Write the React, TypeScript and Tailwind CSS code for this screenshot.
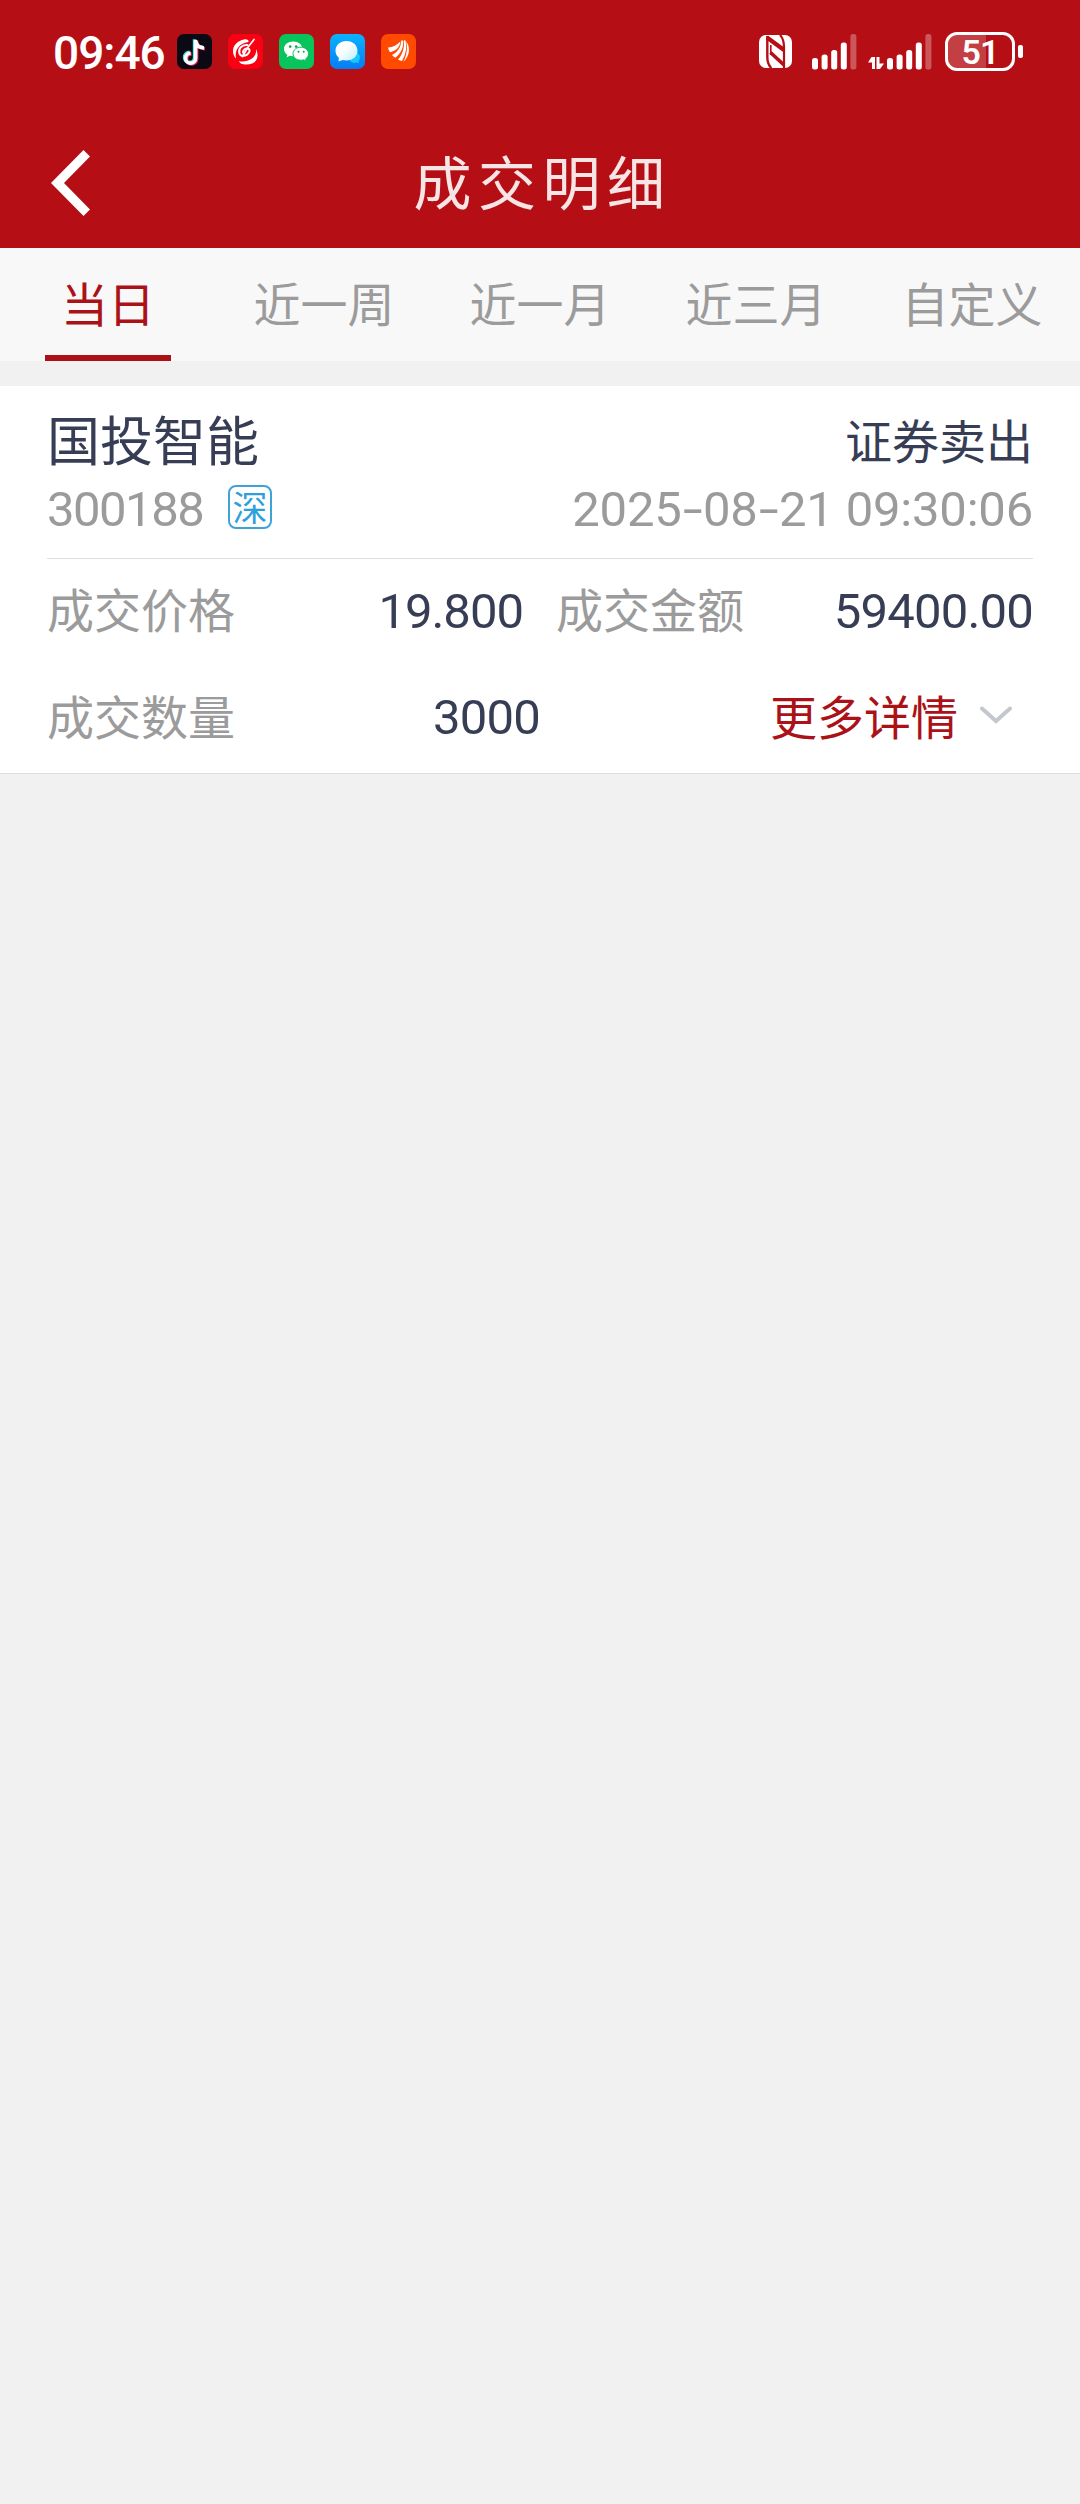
import { ReactNode } from "react";
import { clsx } from "clsx";

const tabs = ["当日", "近一周", "近一月", "近三月", "自定义"];

function Num({ className, children }: { className?: string; children: ReactNode }) {
  return (
    <span className={clsx("pt-[2px] font-['Roboto','Noto_Sans_CJK_SC',sans-serif] text-[49px] whitespace-nowrap", className)}>
      {children}
    </span>
  );
}

function Dash() {
  return <span className="mx-[1px] inline-block origin-center scale-x-[1.45] px-[3px]">-</span>;
}

function TikTokIcon() {
  return (
    <svg viewBox="0 0 35 35" className="size-[35px]">
      <rect width="35" height="35" rx="7" fill="#0b0a14" />
      <g fill="none" strokeWidth="3.6">
        <path d="M16.6 5v18.2a5 5 0 1 1-5-5M16.8 6.5c.7 4 3.6 6.3 8.2 6.5" transform="translate(1 .2)" stroke="#4fe3e0" />
        <path d="M16.6 5v18.2a5 5 0 1 1-5-5M16.8 6.5c.7 4 3.6 6.3 8.2 6.5" transform="translate(3 1.8)" stroke="#e8315b" />
        <path d="M16.6 5v18.2a5 5 0 1 1-5-5M16.8 6.5c.7 4 3.6 6.3 8.2 6.5" transform="translate(2 1)" stroke="#fff" />
      </g>
    </svg>
  );
}

function SwirlIcon() {
  return (
    <svg viewBox="0 0 35 35" className="size-[35px]">
      <rect width="35" height="35" rx="7" fill="#f90012" />
      <path d="M20.5 8C21 6 19 5 16 5.500 10 6.500 5 11 5 17c0 3 1 5.500 3 7.500C6.500 15.500 11 9.500 20.500 8Z" fill="#fff" />
      <path d="M11 27c3 1.200 9 .5 13-2.500 3-2.500 4.500-5.500 4-9.500 3.500 7 1.500 15.500-10 15.500-3.500 0-6.500-1-7-3.500Z" fill="#fff" />
      <g fill="none" stroke="#fff" strokeLinecap="round">
        <path d="M26 5.5C22 10 18 15 14.5 22.5" strokeWidth="1.8" />
        <path d="M19.5 11c-6-.5-9.500 4-8 8.500 1 3.500 7 3 9.500-1 1.500-2.500 0-4.500-2.500-4-3 .6-4.500 3.500-2.500 5" strokeWidth="2" />
      </g>
    </svg>
  );
}

function WeChatIcon() {
  return (
    <svg viewBox="0 0 35 35" className="size-[35px]">
      <rect width="35" height="35" rx="7" fill="#07c45d" />
      <path d="M14.2 7.5c-5.200 0-9.200 3.200-9.200 7.400 0 2.400 1.300 4.400 3.400 5.800l-.8 2.700 3.100-1.600c1.100.3 2.300.5 3.500.5 5.200 0 9.200-3.200 9.200-7.400s-4-7.400-9.200-7.400Z" fill="#fff" />
      <path d="M22 13.2c-4.500 0-8 2.900-8 6.500s3.500 6.500 8 6.500c1 0 1.900-.1 2.700-.4l2.600 1.400-.7-2.300c1.800-1.200 2.900-3.100 2.900-5.200 0-3.600-3.300-6.500-7.500-6.500Z" fill="#fff" stroke="#07c45d" strokeWidth="1" />
      <g fill="#07a94f">
        <circle cx="11.2" cy="12.6" r="1.3" />
        <circle cx="17.2" cy="12.6" r="1.3" />
        <circle cx="19.5" cy="17.8" r="1" />
        <circle cx="24.7" cy="17.8" r="1" />
      </g>
    </svg>
  );
}

function MessageIcon() {
  return (
    <svg viewBox="0 0 35 35" className="size-[35px]">
      <defs>
        <linearGradient id="msg-bg" x1="0" y1="0" x2="0" y2="1">
          <stop offset="0" stopColor="#0ab2ff" />
          <stop offset="1" stopColor="#067df5" />
        </linearGradient>
        <linearGradient id="msg-bubble" x1="0" y1="0" x2="1" y2="1">
          <stop offset=".4" stopColor="#fff" />
          <stop offset="1" stopColor="#b5ecff" />
        </linearGradient>
      </defs>
      <rect width="35" height="35" rx="7" fill="url(#msg-bg)" />
      <path d="M24.5 18a5.500 5.500 0 0 1 4 9.200l.5 2-2.400-.6A5.500 5.500 0 1 1 24.5 18Z" fill="#18c8fb" />
      <path d="M16.5 7c6.500 0 11 4.300 11 9.800s-4.500 9.700-11 9.700c-1.400 0-2.600-.2-3.700-.5L8.500 27.500l.3-3.700c-2-1.700-3.300-4.200-3.300-7C5.500 11.300 10 7 16.500 7Z" fill="url(#msg-bubble)" />
    </svg>
  );
}

function FanIcon() {
  return (
    <svg viewBox="0 0 35 35" className="size-[35px]">
      <rect width="35" height="35" rx="7" fill="#ff4a00" />
      <g fill="#fff">
        <path d="M7 13.5c5-.3 9-2.500 12.500-6C19 13 15 17 9 18.200c-1-1.500-1.700-3-2-4.700Z" />
        <path d="M20.3 6.500h2c.3 7-2.300 13-8 17.300-1.300-.8-2.400-1.700-3.300-2.800 6-3 9-8 9.300-14.500Z" />
        <path d="M23 6.200l1.500.3c1.700 8-.2 15-3.500 20.500l-4-1.300C21.500 20.500 23.500 14 23 6.200Z" />
        <path d="M25.300 7.500c4 5.500 4 14-3 20.500C26 21 26.500 14 25.300 7.500Z" />
      </g>
    </svg>
  );
}

function NfcIcon() {
  return (
    <svg viewBox="0 0 33 33" className="size-[33px]">
      <rect width="33" height="33" rx="7" fill="#fff" />
      <g fill="none" stroke="#b50f15">
        <path d="M8.300 1v21c0 4 1 8 4 11" strokeWidth="2.400" />
        <path d="M25 33V12c0-5-1-9-4-12" strokeWidth="2.200" />
        <path d="M8 2.500 25 15" strokeWidth="4.200" />
        <path d="M11.500 17.500 25 30" strokeWidth="3.600" />
        <path d="M11.800 10v10" strokeWidth="1.600" />
      </g>
    </svg>
  );
}

function SignalBars() {
  return (
    <svg viewBox="0 0 45 36" className="h-9 w-[45px]" fill="#fff">
      <rect x="0" y="24" width="6" height="11.5" rx="2.5" />
      <rect x="9.6" y="20.5" width="6" height="15" rx="2.5" />
      <rect x="19.2" y="16" width="6" height="19.5" rx="2.5" />
      <rect x="28.8" y="8.5" width="6" height="27" rx="2.5" />
      <rect x="38.4" y="0" width="6" height="35.5" rx="2.5" fillOpacity=".3" />
    </svg>
  );
}

function DataArrows() {
  return (
    <svg viewBox="0 0 16 12" className="h-3 w-4" fill="#fff">
      <path d="M3.500 0H7v12H4V5.500H0Z" />
      <path d="M8.500 0h3v6.500H16L12 12H8.500Z" />
    </svg>
  );
}

function Battery() {
  return (
    <div className="flex items-center gap-[3px]">
      <div className="relative h-[39px] w-[70px] overflow-hidden rounded-[12px] border-[3px] border-white">
        <div className="h-full w-[38px] bg-white/20" />
        <span className="absolute inset-0 text-center font-['Roboto',sans-serif] text-[34px] leading-[34px] font-semibold tracking-[-1px]">51</span>
      </div>
      <div className="h-[13px] w-[5px] rounded-[2px] bg-white" />
    </div>
  );
}

function StatusBar() {
  return (
    <div className="flex h-[103px] items-start px-[53px] pt-8 text-white">
      <span className="w-[124px] font-['Roboto',sans-serif] text-[46px] leading-[43px] font-medium tracking-[-1px]">09:46</span>
      <div className="flex gap-4 pt-[2px]">
        <TikTokIcon />
        <SwirlIcon />
        <WeChatIcon />
        <MessageIcon />
        <FanIcon />
      </div>
      <div className="mr-[4px] ml-auto flex items-center">
        <NfcIcon />
        <div className="ml-5">
          <SignalBars />
        </div>
        <div className="mt-[22px] ml-[11px]">
          <DataArrows />
        </div>
        <div className="ml-[3px]">
          <SignalBars />
        </div>
        <div className="ml-[13px]">
          <Battery />
        </div>
      </div>
    </div>
  );
}

export default function App() {
  return (
    <div className="min-h-[2504px] w-[1080px] bg-[#f1f1f1] font-['Noto_Sans_CJK_SC',sans-serif] text-[47px]">
      <header className="h-[248px] bg-[#b50f15]">
        <StatusBar />
        <div className="grid h-[145px] grid-cols-[1fr_auto_1fr] items-start">
          <svg viewBox="0 0 39 66" className="mt-[47px] ml-[51px] h-[66px] w-[39px]">
            <path d="M32.500 0 39 6.500 13 33l26 26.500L32.500 66 0 33Z" fill="#fff" />
          </svg>
          <h1 className="mt-[34px] pl-[5px] text-[58px] leading-[86px] tracking-[6.500px] text-[#f7e4e5]">成交明细</h1>
        </div>
      </header>

      <nav className="grid h-[113px] grid-cols-5 bg-[#f8f8f8]">
        {tabs.map((tab, i) => (
          <button
            key={tab}
            className={clsx("flex flex-col items-center justify-between", i === 0 ? "text-[#ab1218]" : "text-[#9b9b9b]")}
          >
            <span className="mt-[19px] leading-[70px]">{tab}</span>
            {i === 0 && <span className="h-[6px] w-[126px] bg-[#ab1218]" />}
          </button>
        ))}
      </nav>

      <section className="mt-[25px] h-[388px] border-b border-[#dfdfdf] bg-white px-[47px] pt-6 text-[#373d55]">
        <div className="h-[149px] border-b border-[#dfdfdf]">
          <div className="flex h-[62px] items-start justify-between">
            <h2 className="text-[53px] leading-[56px]">国投智能</h2>
            <span className="leading-[58px]">证券卖出</span>
          </div>
          <div className="flex h-[74px] items-center justify-between text-[#9b9b9b]">
            <div className="flex items-center">
              <Num className="w-[181px] tracking-[-1.5px]">300188</Num>
              <span className="mb-1 flex size-[44px] items-center justify-center rounded-[8px] border-2 border-[#3fa3d8] pb-1 text-[35px] leading-none text-[#2f9fdc]">
                深
              </span>
            </div>
            <Num className="tracking-[-0.2px]">
              2025<Dash />08<Dash />21 09:30:06
            </Num>
          </div>
        </div>

        <div className="flex h-[103px] items-center">
          <span className="mb-1 w-[188px] text-[#9b9b9b]">成交价格</span>
          <Num className="w-[288px] text-right tracking-[-1px]">19.800</Num>
          <span className="mb-1 ml-[33px] w-[188px] text-[#9b9b9b]">成交金额</span>
          <Num className="flex-1 text-right tracking-[-0.8px]">59400.00</Num>
        </div>
        <div className="flex h-[110px] items-center">
          <span className="mb-1 w-[188px] text-[#9b9b9b]">成交数量</span>
          <Num className="w-[305px] text-right tracking-[-0.8px]">3000</Num>
          <button className="mr-[21px] mb-1 ml-auto flex items-center gap-[22px] text-[#ab1218]">
            更多详情
            <svg viewBox="0 0 32 18" className="h-[18px] w-8" fill="none">
              <path d="M2 2.500 16 15 30 2.500" stroke="#c5c7cf" strokeWidth="4" strokeLinecap="round" />
            </svg>
          </button>
        </div>
      </section>
    </div>
  );
}
